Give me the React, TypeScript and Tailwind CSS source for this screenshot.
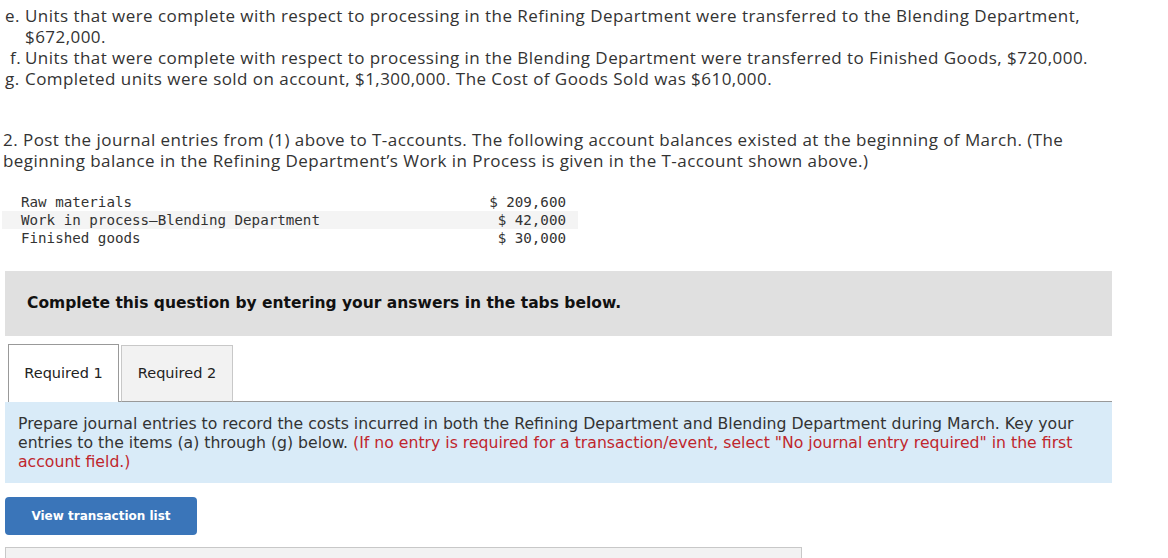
import React from "react";

const proxima = { fontFamily: "'Open Sans', Lato, sans-serif" };
const tahoma = { fontFamily: "'DejaVu Sans', Verdana, sans-serif" };
const mono = { fontFamily: "'DejaVu Sans Mono', 'Liberation Mono', monospace" };

export default function App() {
  return (
    <div className="w-[1168px] h-[558px] overflow-hidden bg-white text-[#333]">
      <div style={proxima} className="pt-[5px] text-[17px] tracking-[0.45px] leading-[21px] text-[#333] whitespace-nowrap">
        <div className="flex">
          <span className="w-[25px] pl-[5px] shrink-0">e.</span>
          <span>
            Units that were complete with respect to processing in the Refining Department were transferred to the Blending Department,
            <br />
            $672,000.
          </span>
        </div>
        <div className="flex">
          <span className="w-[25px] pl-[10px] shrink-0">f.</span>
          <span>Units that were complete with respect to processing in the Blending Department were transferred to Finished Goods, $720,000.</span>
        </div>
        <div className="flex">
          <span className="w-[25px] pl-[5px] shrink-0">g.</span>
          <span>Completed units were sold on account, $1,300,000. The Cost of Goods Sold was $610,000.</span>
        </div>
        <p className="mt-[40px] pl-[3px]">
          2. Post the journal entries from (1) above to T-accounts. The following account balances existed at the beginning of March. (The
          <br />
          beginning balance in the Refining Department’s Work in Process is given in the T-account shown above.)
        </p>
      </div>

      <div style={mono} className="mt-[22px] ml-[2px] w-[576px] text-[14.2px] leading-[18px] text-[#333]">
        <div className="flex h-[18px] items-center pl-[19px] pr-[12px]">
          <span className="flex-1">Raw materials</span>
          <span>$ 209,600</span>
        </div>
        <div className="flex h-[18px] items-center pl-[19px] pr-[12px] bg-[#f4f4f4]">
          <span className="flex-1">Work in process—Blending Department</span>
          <span>$ 42,000</span>
        </div>
        <div className="flex h-[18px] items-center pl-[19px] pr-[12px]">
          <span className="flex-1">Finished goods</span>
          <span>$ 30,000</span>
        </div>
      </div>

      <div className="ml-[5px] w-[1107px]">
        <div style={tahoma} className="mt-[24px] h-[65px] bg-[#e0e0e0] flex items-center pl-[22px] text-[15.5px] font-bold text-[#111]">
          Complete this question by entering your answers in the tabs below.
        </div>

        <div style={tahoma} className="mt-[8px] flex items-end h-[58px] text-[14.5px] text-[#222]">
          <div className="w-[3px] h-[1px]" />
          <div className="w-[111px] h-[58px] bg-white border-l border-t border-r border-[#999] flex items-center justify-center">
            Required 1
          </div>
          <div className="w-[2px] h-[1px] bg-[#999]" />
          <div className="w-[112px] h-[57px] bg-[#f2f2f2] border-l border-t border-r border-[#c8c8c8] border-b border-b-[#999] flex items-center justify-center">
            Required 2
          </div>
          <div className="flex-1 h-[1px] bg-[#999]" />
        </div>

        <div style={tahoma} className="bg-[#d9ebf8] h-[81px] pl-[13px] pt-[12px] text-[15.7px] leading-[19px] text-[#333] whitespace-nowrap">
          Prepare journal entries to record the costs incurred in both the Refining Department and Blending Department during March. Key your
          <br />
          entries to the items (a) through (g) below.{" "}
          <span className="text-[#c0262d]">
            (If no entry is required for a transaction/event, select "No journal entry required" in the first
            <br />
            account field.)
          </span>
        </div>

        <button
          style={tahoma}
          className="mt-[14px] w-[192px] h-[38px] rounded-[4px] bg-[#3a75b9] text-white text-[12px] font-bold flex items-center justify-center"
        >
          View transaction list
        </button>

        <div className="mt-[12px] w-[797px] h-[40px] bg-[#f2f2f2] border border-[#c8c8c8]" />
      </div>
    </div>
  );
}
